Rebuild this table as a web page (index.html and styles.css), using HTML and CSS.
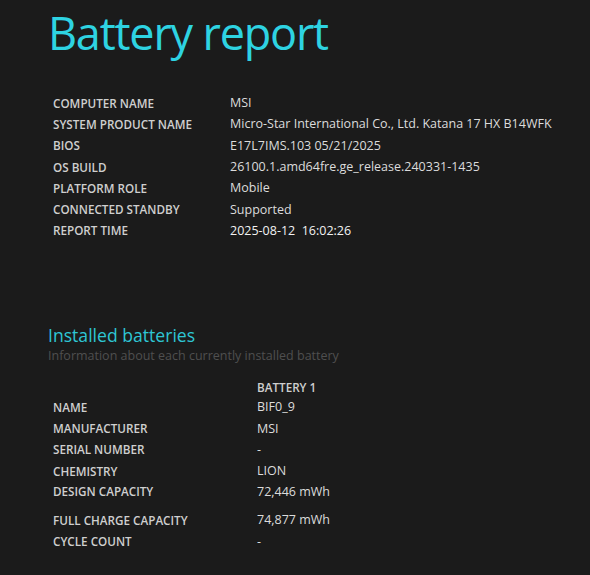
FILE: index.html
```html
<!DOCTYPE html>
<html>
<head>
<meta charset="utf-8">
<link rel="stylesheet" href="styles.css">
</head>
<body>
<h1 class="title">Battery report</h1>
<table class="info">
<tr><td class="label">COMPUTER NAME</td><td class="value">MSI</td></tr>
<tr><td class="label">SYSTEM PRODUCT NAME</td><td class="value">Micro-Star International Co., Ltd. Katana 17 HX B14WFK</td></tr>
<tr><td class="label">BIOS</td><td class="value">E17L7IMS.103 05/21/2025</td></tr>
<tr><td class="label">OS BUILD</td><td class="value">26100.1.amd64fre.ge_release.240331-1435</td></tr>
<tr><td class="label">PLATFORM ROLE</td><td class="value">Mobile</td></tr>
<tr><td class="label">CONNECTED STANDBY</td><td class="value">Supported</td></tr>
<tr><td class="label">REPORT TIME</td><td class="value bright">2025-08-12&nbsp;&nbsp;16:02:26</td></tr>
</table>
<h2 class="section">Installed batteries</h2>
<div class="subtitle">Information about each currently installed battery</div>
<table class="batt">
<tr class="headrow"><td class="label"></td><td class="label head">BATTERY 1</td></tr>
<tr><td class="label">NAME</td><td class="value">BIF0_9</td></tr>
<tr><td class="label">MANUFACTURER</td><td class="value">MSI</td></tr>
<tr><td class="label">SERIAL NUMBER</td><td class="value">-</td></tr>
<tr><td class="label">CHEMISTRY</td><td class="value">LION</td></tr>
<tr class="gap"><td class="label">DESIGN CAPACITY</td><td class="value">72,446 mWh</td></tr>
<tr><td class="label">FULL CHARGE CAPACITY</td><td class="value">74,877 mWh</td></tr>
<tr><td class="label">CYCLE COUNT</td><td class="value">-</td></tr>
</table>
</body>
</html>
```
FILE: styles.css
```css
html, body {
  margin: 0;
  padding: 0;
  background: #1b1b1b;
}
body {
  font-family: "Open Sans", "Noto Sans", sans-serif;
  color: #dedede;
  padding: 0 0 0 48px;
  height: 575px;
  overflow: hidden;
}
.title {
  margin: 0;
  padding-top: 2px;
  font-size: 45px;
  font-weight: 400;
  color: #2ed3e2;
  line-height: 62px;
  letter-spacing: -1.2px;
}
.info {
  border-collapse: collapse;
  margin: 28px 0 0 0;
}
.info td, .batt td {
  padding: 0 5px;
  height: 21.3px;
  vertical-align: middle;
  white-space: nowrap;
}
.label {
  font-size: 11.7px;
  font-weight: 600;
  color: #cfcfcf;
  width: 167px;
}
.batt .label {
  width: 194px;
}
.value {
  font-size: 12.5px;
  color: #dcdcdc;
  padding-top: 1px;
}
.bright {
  color: #f2f2f2;
}
.section {
  margin: 82px 0 0 0;
  font-size: 17.6px;
  font-weight: 500;
  color: #2ec6d4;
  line-height: 24px;
}
.subtitle {
  font-size: 12.5px;
  color: #4f4f4f;
  line-height: 18px;
}
.batt {
  border-collapse: collapse;
  margin-top: 12px;
}
.batt .headrow td {
  height: 19px;
}
.batt .head {
  color: #cfcfcf;
}
.batt .gap td {
  height: 26px;
  vertical-align: top;
  padding-top: 2px;
}
```
